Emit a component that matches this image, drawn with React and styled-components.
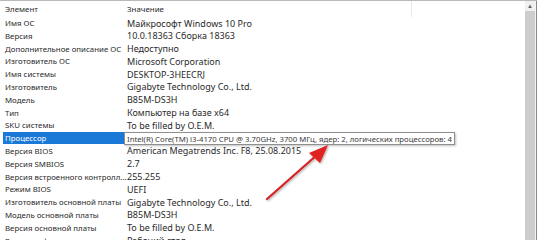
import React from "react";
import styled, { createGlobalStyle } from "styled-components";

const Global = createGlobalStyle`
  html, body { margin: 0; padding: 0; background: #fff; }
  body {
    font-family: "Noto Sans", "Open Sans", sans-serif;
  }
`;

const Frame = styled.div`
  position: relative;
  width: 537px;
  height: 240px;
  overflow: hidden;
  background: #fff;
  border-top: 1px solid #b9b9b9;
  box-sizing: border-box;
  display: grid;
  grid-template-columns: 1fr 10px 2px;
`;

const Table = styled.div`
  display: flex;
  flex-direction: column;
  padding-left: 3px;
`;

const Header = styled.div`
  display: grid;
  grid-template-columns: 121px 288px 1fr;
  height: 15.5px;
  align-items: center;
`;

const HeadCell = styled.div`
  font-size: 7.9px;
  color: #2a2a2a;
  padding-left: ${p => p.$pad || 2}px;
  height: 100%;
  display: flex;
  align-items: center;
  border-right: ${p => (p.$divider ? "1px solid #e8e8e8" : "none")};
`;

const Row = styled.div`
  display: grid;
  grid-template-columns: 121px 1fr;
  height: 12.8px;
  align-items: center;
  position: relative;
`;

const NameCell = styled.div`
  font-size: 7.85px;
  color: ${p => (p.$selected ? "#fff" : "#2a2a2a")};
  background: ${p => (p.$selected ? "#1a78d6" : "transparent")};
  height: ${p => (p.$selected ? "11.5px" : "auto")};
  display: flex;
  align-items: center;
  padding-left: 2px;
  white-space: nowrap;
`;

const ValueCell = styled.div`
  font-size: 9px;
  color: #2a2a2a;
  padding-left: 3px;
  white-space: nowrap;
  position: relative;
`;

const Tooltip = styled.div`
  position: absolute;
  left: 0px;
  top: -6px;
  height: 11px;
  display: flex;
  align-items: center;
  padding: 0 2px;
  background: #fff;
  border: 1px solid #8f8f8f;
  box-shadow: 1px 1px 2px rgba(0, 0, 0, 0.25);
  font-size: 7.75px;
  color: #3a3a3a;
  white-space: nowrap;
  z-index: 2;
`;

const Scrollbar = styled.div`
  background: #cdcdcd;
  display: flex;
  flex-direction: column;
`;

const ScrollUp = styled.div`
  height: 10px;
  background: #f0f0f0;
  display: flex;
  align-items: center;
  justify-content: center;
  font-size: 6px;
  color: #606060;
`;

const Edge = styled.div`
  background: linear-gradient(to right, #f4f4f4 0 1px, #8a8a8a 1px);
`;

const Arrow = styled.svg`
  position: absolute;
  left: 0;
  top: 0;
  pointer-events: none;
  z-index: 3;
`;

const rows = [
  ["Имя ОС", "Майкрософт Windows 10 Pro"],
  ["Версия", "10.0.18363 Сборка 18363"],
  ["Дополнительное описание ОС", "Недоступно"],
  ["Изготовитель ОС", "Microsoft Corporation"],
  ["Имя системы", "DESKTOP-3HEECRJ"],
  ["Изготовитель", "Gigabyte Technology Co., Ltd."],
  ["Модель", "B85M-DS3H"],
  ["Тип", "Компьютер на базе x64"],
  ["SKU системы", "To be filled by O.E.M."],
  ["Процессор", "Intel(R) Core(TM) i3-4170 CPU @ 3.70GHz, 3700 МГц, ядер: 2, логических процессоров: 4", true],
  ["Версия BIOS", "American Megatrends Inc. F8, 25.08.2015"],
  ["Версия SMBIOS", "2.7"],
  ["Версия встроенного контролл...", "255.255"],
  ["Режим BIOS", "UEFI"],
  ["Изготовитель основной платы", "Gigabyte Technology Co., Ltd."],
  ["Модель основной платы", "B85M-DS3H"],
  ["Версия основной платы", "To be filled by O.E.M."],
  ["Роль платформы", "Рабочий стол"],
];

export default function App() {
  return (
    <>
      <Global />
      <Frame>
        <Table>
          <Header>
            <HeadCell>Элемент</HeadCell>
            <HeadCell $pad={3} $divider>Значение</HeadCell>
            <HeadCell />
          </Header>
          {rows.map(([name, value, selected]) => (
            <Row key={name}>
              <NameCell $selected={selected}>{name}</NameCell>
              <ValueCell>
                {selected ? <Tooltip>{value}</Tooltip> : value}
              </ValueCell>
            </Row>
          ))}
        </Table>
        <Scrollbar>
          <ScrollUp>▲</ScrollUp>
        </Scrollbar>
        <Edge />
        <Arrow width="537" height="240" viewBox="0 0 537 240">
          <defs>
            <filter id="sh" x="-20%" y="-20%" width="140%" height="140%">
              <feDropShadow dx="1" dy="1" stdDeviation="1" floodColor="#000" floodOpacity="0.35" />
            </filter>
          </defs>
          <g filter="url(#sh)">
            <line x1="267" y1="198" x2="318" y2="153" stroke="#d42323" strokeWidth="2.2" strokeLinecap="round" />
            <polygon points="328,144 309,152 320,162" fill="#e02020" />
          </g>
        </Arrow>
      </Frame>
    </>
  );
}
